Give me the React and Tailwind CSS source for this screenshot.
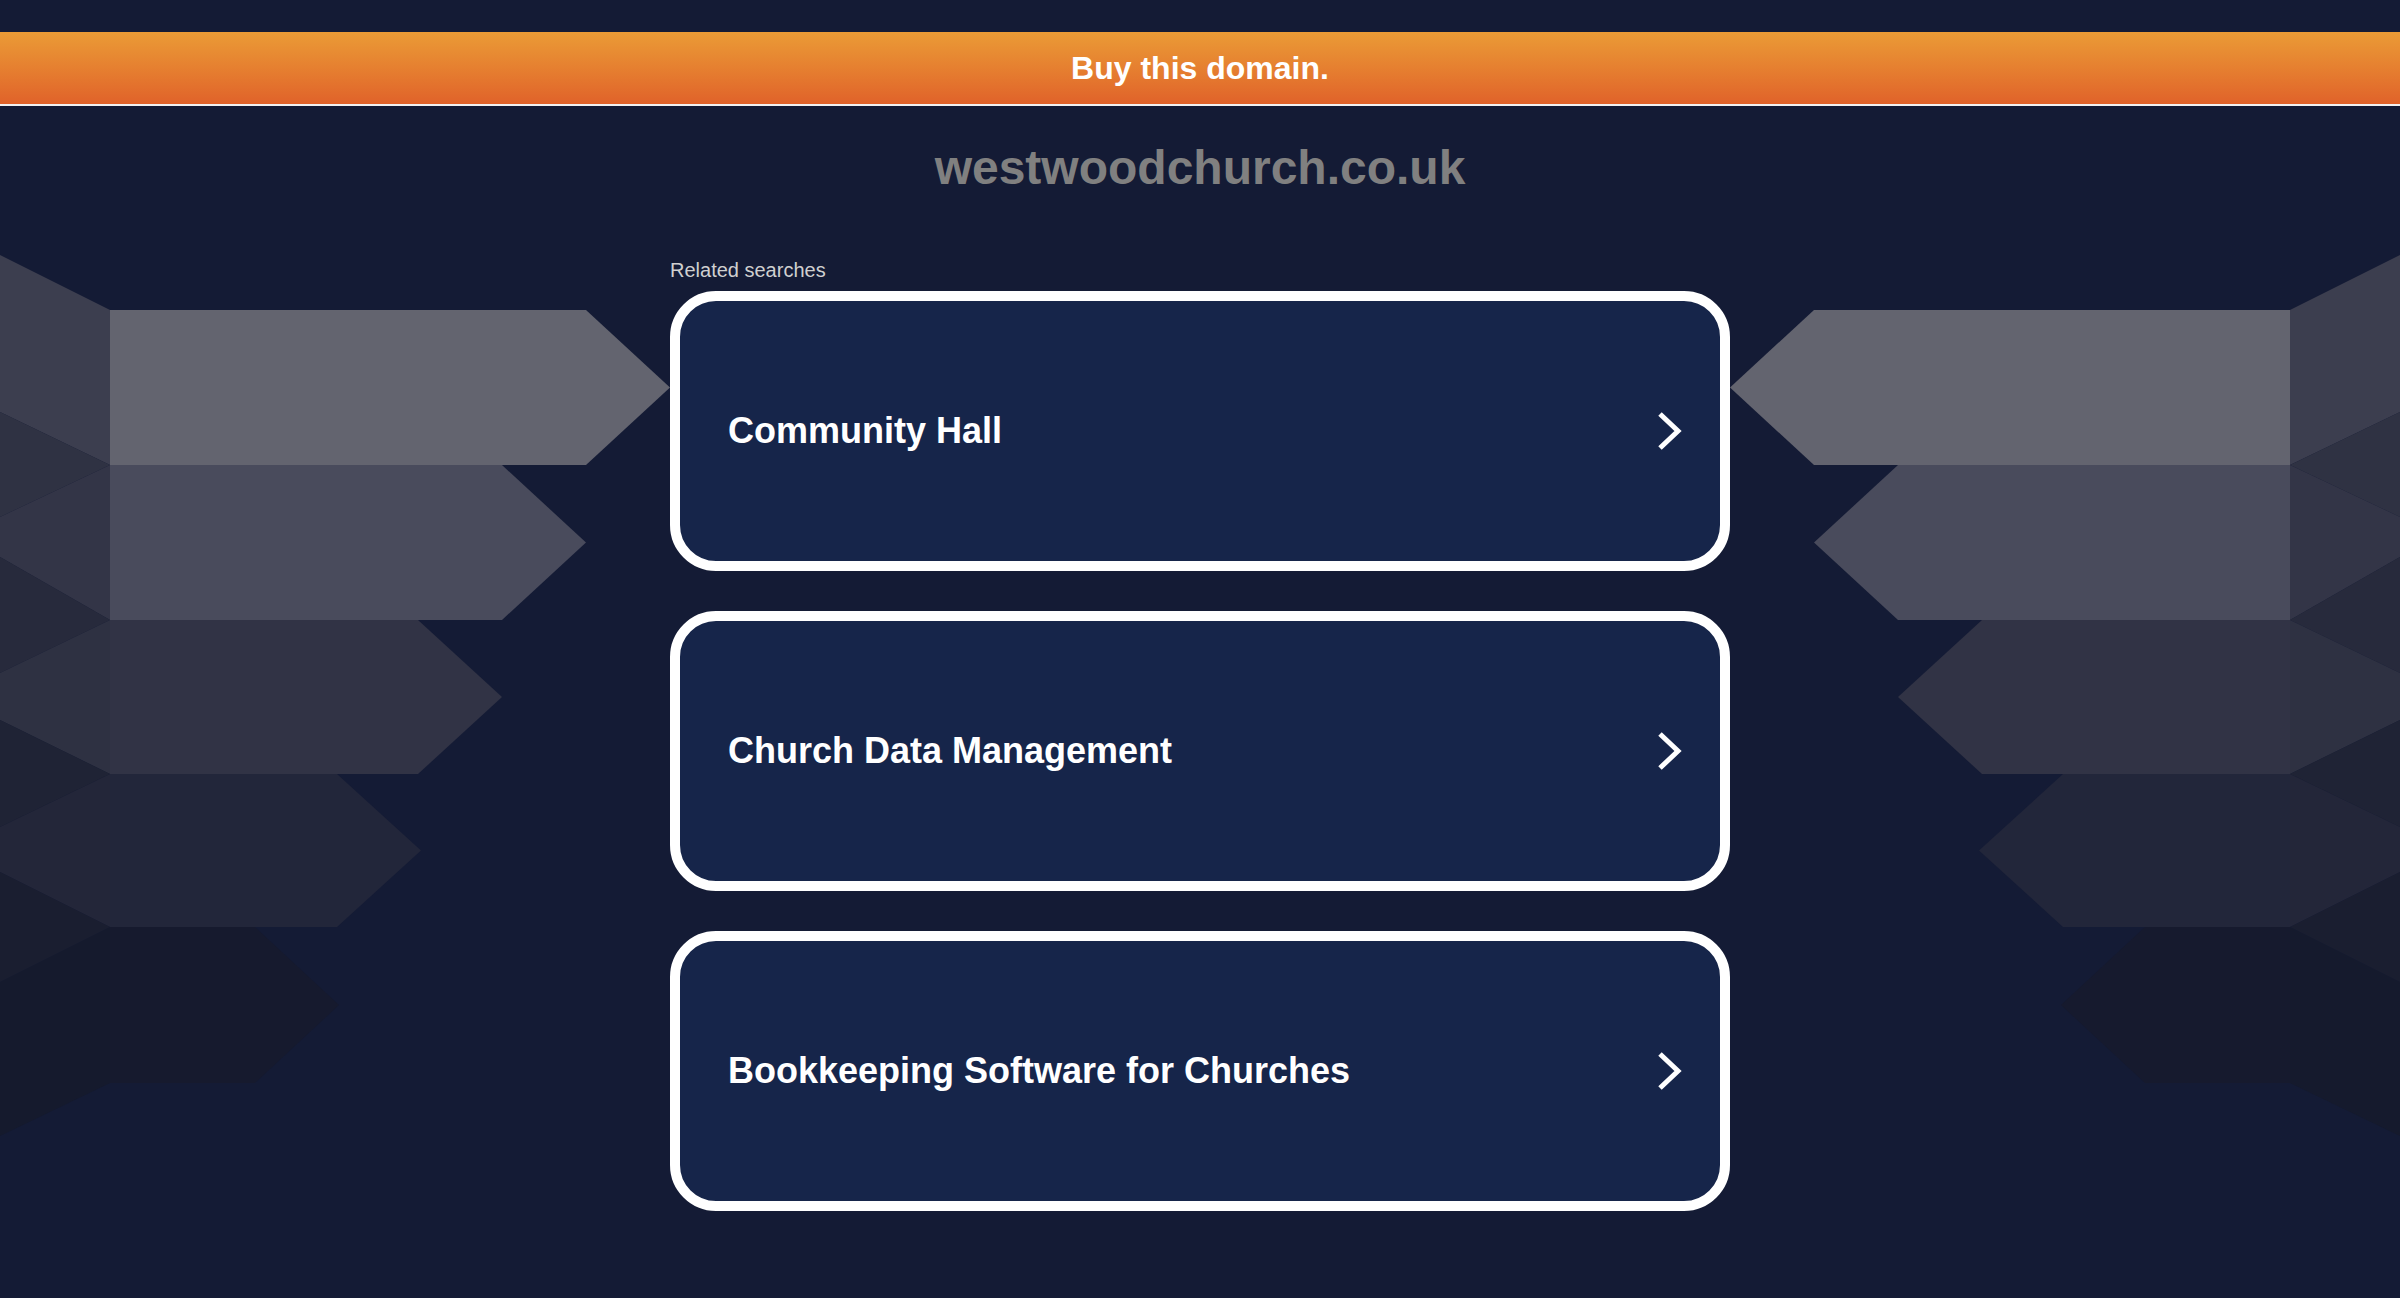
import React from "react";

// Decorative stacked arrows (page coordinates, left side).
const panels = [
  { points: "110,310 110,465 0,412 0,255", fill: "#3c3e4f" },
  { points: "110,465 0,412 0,517", fill: "#2f3243" },
  { points: "110,465 110,620 0,557 0,517", fill: "#333547" },
  { points: "110,620 0,557 0,673", fill: "#272a3c" },
  { points: "110,620 110,774 0,720 0,673", fill: "#2e3142" },
  { points: "110,774 0,720 0,827", fill: "#1f2335" },
  { points: "110,774 110,927 0,872 0,827", fill: "#232639" },
  { points: "110,927 0,872 0,982", fill: "#1a1e30" },
  { points: "110,927 110,1083 0,1136 0,982", fill: "#151a2d" },
];

const arrows = [
  { top: 310, bottom: 465, end: 586, fill: "#63646f" },
  { top: 465, bottom: 620, end: 502, fill: "#494b5c" },
  { top: 620, bottom: 774, end: 418, fill: "#313345" },
  { top: 774, bottom: 927, end: 337, fill: "#22263a" },
  { top: 927, bottom: 1083, end: 255, fill: "#161a2e" },
];

function Arrows({ flip = false }) {
  return (
    <svg
      width="670"
      height="900"
      viewBox="0 240 670 900"
      className="block shrink-0"
      aria-hidden="true"
    >
      <g transform={flip ? "translate(670,0) scale(-1,1)" : undefined}>
        {panels.map((p, i) => (
          <polygon key={i} points={p.points} fill={p.fill} />
        ))}
        {arrows.map((a, i) => {
          const mid = (a.top + a.bottom) / 2;
          return (
            <polygon
              key={i}
              points={`110,${a.top} ${a.end},${a.top} ${a.end + 84},${mid} ${a.end},${a.bottom} 110,${a.bottom}`}
              fill={a.fill}
            />
          );
        })}
      </g>
    </svg>
  );
}

function Chevron() {
  return (
    <svg width="28" height="42" viewBox="0 0 28 42" fill="none" aria-hidden="true">
      <polyline
        points="4,4 22,21 4,38"
        stroke="#ffffff"
        strokeWidth="5"
        strokeLinejoin="miter"
        strokeLinecap="butt"
      />
    </svg>
  );
}

const busquedas = [
  "Community Hall",
  "Church Data Management",
  "Bookkeeping Software for Churches",
];

export default function App() {
  return (
    <div
      className="min-h-screen w-full bg-[#141b35] overflow-hidden"
      style={{ fontFamily: '"Liberation Sans", Arial, Helvetica, sans-serif' }}
    >
      {/* franja superior */}
      <div className="h-[32px]" />

      {/* banner naranja */}
      <div className="flex h-[74px] items-center justify-center border-b-2 border-[#f2f2f2] bg-gradient-to-b from-[#ea9b36] to-[#e0622a]">
        <span className="text-[32px] font-bold leading-none text-white">
          Buy this domain.
        </span>
      </div>

      {/* dominio */}
      <div className="h-[134px] pt-[38px] text-center">
        <h1 className="text-[48px] font-bold leading-none text-[#808080]">
          westwoodchurch.co.uk
        </h1>
      </div>

      <div className="flex w-full justify-center">
        <Arrows />

        <div className="w-[1060px] shrink-0 pt-[20px]">
          <div className="mb-[11px] text-[20px] leading-none text-[#d0d0d0]">
            Related searches
          </div>
          <div className="flex flex-col gap-[40px]">
            {busquedas.map((texto) => (
              <a
                key={texto}
                href="#"
                className="flex h-[280px] items-center justify-between rounded-[46px] border-[10px] border-white bg-[#16254a] pl-[48px] pr-[36px]"
              >
                <span className="text-[36px] font-bold leading-none text-white">
                  {texto}
                </span>
                <Chevron />
              </a>
            ))}
          </div>
        </div>

        <Arrows flip />
      </div>
    </div>
  );
}
